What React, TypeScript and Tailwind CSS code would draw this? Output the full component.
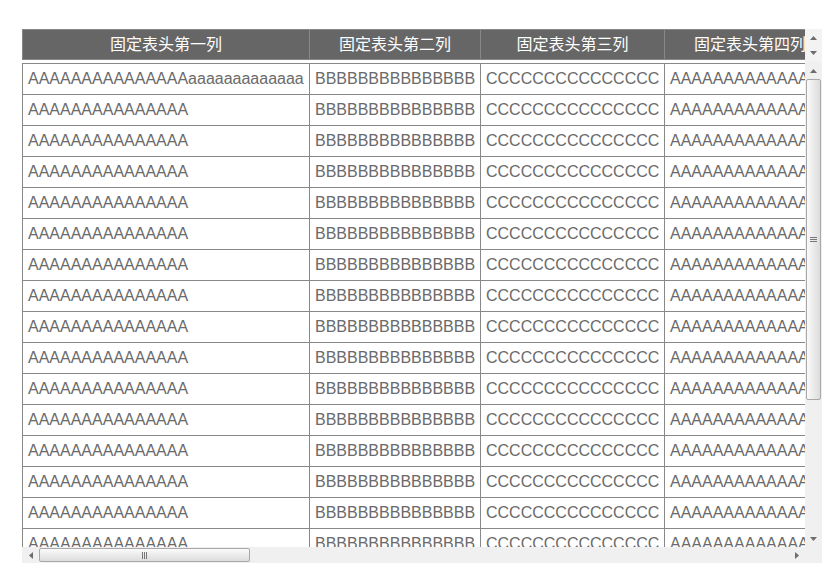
const A15 = "AAAAAAAAAAAAAAA";
const B15 = "BBBBBBBBBBBBBBB";
const C15 = "CCCCCCCCCCCCCCC";

const nums = ["一", "二", "三", "四", "五", "六", "七", "八", "九", "十", "十一", "十二", "十三", "十四", "十五"];

type Col = { w: string; head: string; text: string };

// col 1 holds the long first cell, then B / C / A repeat
const cols: Col[] = nums.map((n, i) => {
  const kind = i === 0 ? "A" : ["A", "B", "C"][i % 3];
  return {
    w: i === 0 ? "w-[287px]" : kind === "C" ? "w-[184px]" : "w-[171px]",
    head: `固定表头第${n}列`,
    text: kind === "A" ? A15 : kind === "B" ? B15 : C15,
  };
});

const rows = Array.from({ length: 22 }, (_, i) => i);

function Arrow({ dir }: { dir: "up" | "down" | "left" | "right" }) {
  const pts = {
    up: "0,4 3.5,0 7,4",
    down: "0,0 7,0 3.5,4",
    left: "4,0 4,7 0,3.5",
    right: "0,0 0,7 4,3.5",
  }[dir];
  const vertical = dir === "up" || dir === "down";
  return (
    <svg width={vertical ? 7 : 4} height={vertical ? 4 : 7} viewBox={vertical ? "0 0 7 4" : "0 0 4 7"}>
      <polygon points={pts} fill="#6d6d6d" />
    </svg>
  );
}

function Table({ header }: { header?: boolean }) {
  return (
    <table className="table-fixed border-collapse w-[2746px]">
      <colgroup>
        {cols.map((c, i) => (
          <col key={i} className={c.w} />
        ))}
      </colgroup>
      {header ? (
        <thead>
          <tr>
            {cols.map((c, i) => (
              <th
                key={i}
                className="bg-[#666666] border border-[#888888] text-white font-normal text-[16px] leading-[29px] text-center whitespace-nowrap overflow-hidden p-0"
              >
                {c.head}
              </th>
            ))}
          </tr>
        </thead>
      ) : (
        <tbody>
          {rows.map((r) => (
            <tr key={r}>
              {cols.map((c, i) => (
                <td
                  key={i}
                  className="border border-[#888888] text-[#6a6a6a] text-[16px] leading-[30px] px-[5px] py-0 whitespace-nowrap overflow-hidden"
                >
                  {i === 0 && r === 0 ? c.text + "aaaaaaaaaaaaa" : c.text}
                </td>
              ))}
            </tr>
          ))}
        </tbody>
      )}
    </table>
  );
}

export default function App() {
  return (
    <div className="w-[839px] h-[584px] bg-white pt-[29px] pl-[22px] font-['Liberation_Sans','Noto_Sans_CJK_SC',sans-serif]">
      <div className="w-[800px] flex flex-col">
        {/* header */}
        <div className="flex h-[33px]">
          <div className="w-[783px] overflow-hidden">
            <Table header />
          </div>
          <div className="w-[17px] bg-[#f3f3f3] flex flex-col items-center justify-between py-[7px]">
            <Arrow dir="up" />
            <Arrow dir="down" />
          </div>
        </div>

        {/* body */}
        <div className="flex h-[485px]">
          <div className="w-[783px] overflow-hidden pt-px">
            <Table />
          </div>
          <div className="w-[17px] bg-[#f0f0f0] flex flex-col items-center">
            <div className="h-[17px] flex items-center justify-center">
              <Arrow dir="up" />
            </div>
            <div className="h-[321px] w-[15px] rounded-[2px] border border-[#a8a8a8] bg-[linear-gradient(to_right,#fafafa,#dcdcdc)] flex items-center justify-center">
              <div className="flex flex-col gap-px">
                <div className="w-[7px] h-px bg-[#777]" />
                <div className="w-[7px] h-px bg-[#777]" />
                <div className="w-[7px] h-px bg-[#777]" />
              </div>
            </div>
            <div className="flex-1" />
            <div className="h-[17px] flex items-center justify-center">
              <Arrow dir="down" />
            </div>
          </div>
        </div>

        {/* horizontal scrollbar */}
        <div className="flex h-[16px]">
          <div className="w-[783px] bg-[#f0f0f0] flex items-center">
            <div className="w-[17px] flex justify-center">
              <Arrow dir="left" />
            </div>
            <div className="w-[211px] h-[14px] rounded-[2px] border border-[#a8a8a8] bg-[linear-gradient(to_bottom,#fafafa,#dcdcdc)] flex items-center justify-center">
              <div className="flex gap-px">
                <div className="w-px h-[7px] bg-[#777]" />
                <div className="w-px h-[7px] bg-[#777]" />
                <div className="w-px h-[7px] bg-[#777]" />
              </div>
            </div>
            <div className="flex-1" />
            <div className="w-[17px] flex justify-center">
              <Arrow dir="right" />
            </div>
          </div>
          <div className="w-[17px] bg-[#f0f0f0]" />
        </div>
      </div>
    </div>
  );
}
